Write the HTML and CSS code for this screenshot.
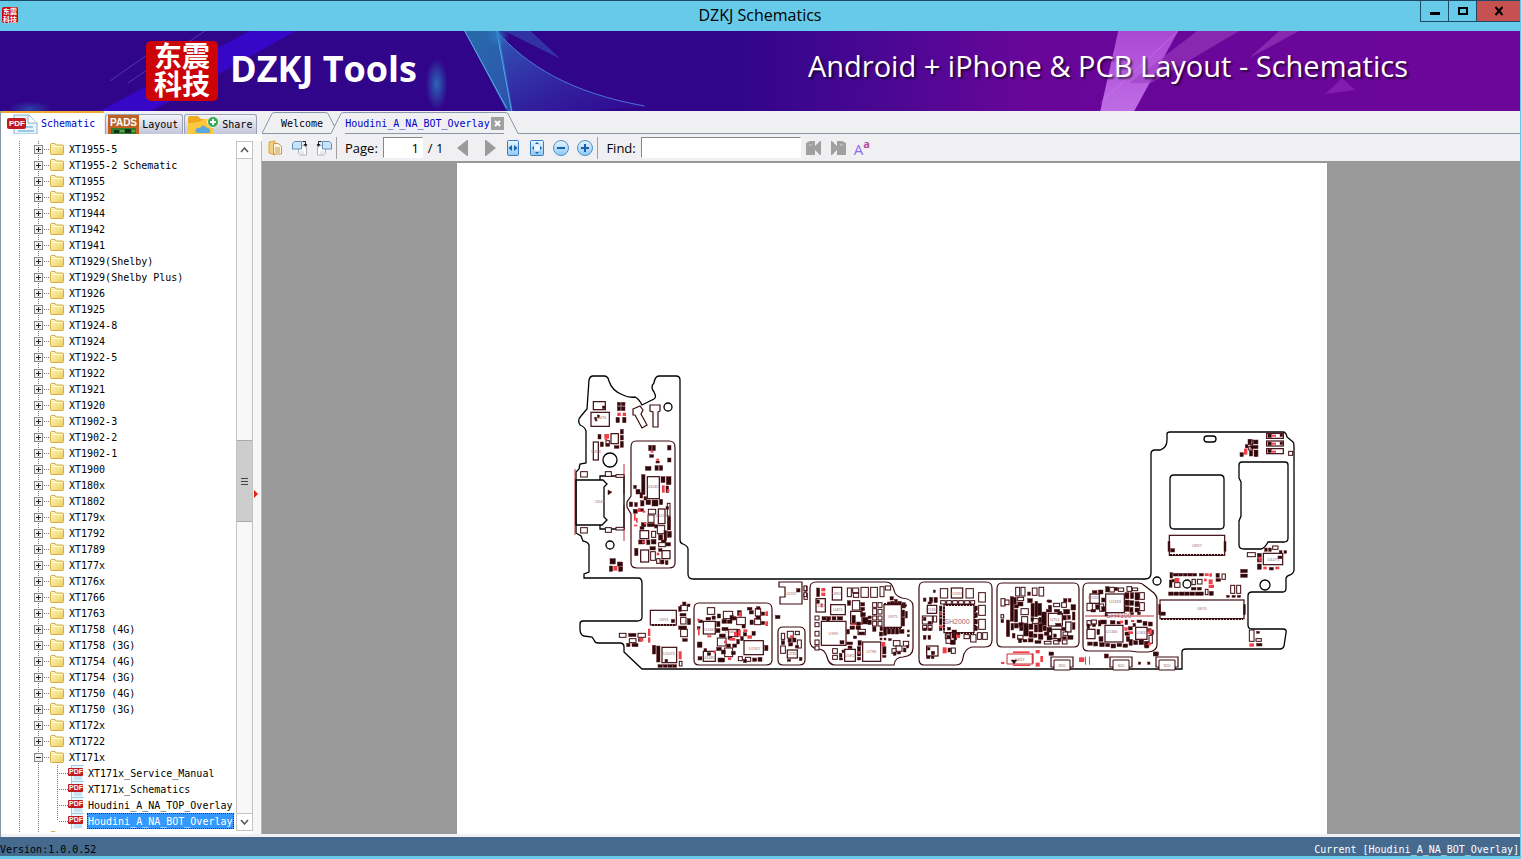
FILE: index.html
```html
<!DOCTYPE html>
<html lang="en">
<head>
    <meta charset="UTF-8">
    <meta name="viewport" content="width=device-width, initial-scale=1.0">
    <title>DZKJ Schematics</title>
    <link rel="stylesheet" href="styles.css">
</head>
<body>
    <!-- shared icons -->
    <svg class="defs" aria-hidden="true">
        <defs>
            <linearGradient id="folderFill" x1="0" y1="0" x2="1" y2="1">
                <stop offset="0" stop-color="#fff6c0"/>
                <stop offset="1" stop-color="#f0cf62"/>
            </linearGradient>
            <linearGradient id="blueFill" x1="0" y1="0" x2="0" y2="1">
                <stop offset="0" stop-color="#e8f6ff"/>
                <stop offset="1" stop-color="#8cc8f2"/>
            </linearGradient>
        </defs>
        <symbol id="folder" viewBox="0 0 14 12">
            <path d="M.5 1.5q0-1 1-1h3.500l1 1.500h6.500q1 0 1 1v7.500q0 1-1 1h-11q-1 0-1-1z" fill="url(#folderFill)" stroke="#d3ad48"/>
            <path d="M1.500 3.500h11" stroke="#fffbe0"/>
        </symbol>
        <symbol id="page-turn" viewBox="0 0 16 16">
            <path d="M6.500 5.500h8v9.500h-6l-2-2z" fill="#fff" stroke="#a9b4bf"/>
            <path d="M8 12h4M8 14h4" stroke="#ccd5dd"/>
            <path d="M.5 3.500l2-2h7v7.500h-9z" fill="#c9e4fa" stroke="#5a8fc0"/>
            <path d="M10.500 1.500h3v4" fill="none" stroke="#222"/>
            <path d="M11.500 4h4l-2 3z" fill="#222"/>
        </symbol>
    </svg>

    <div class="window">
        <header class="titlebar">
            <span class="app-icon">东震<br>科技</span>
            <h1 class="title">DZKJ Schematics</h1>
            <div class="controls">
                <button class="control" aria-label="Minimize"><svg width="10" height="10"><path d="M0 6h10v3H0z"/></svg></button>
                <button class="control" aria-label="Maximize"><svg width="10" height="10"><path d="M1 2h8v6H1z" fill="none" stroke="#000" stroke-width="2"/></svg></button>
                <button class="control close" aria-label="Close"><svg width="10" height="10"><path d="M1.500 1l7 8M8.500 1l-7 8" stroke="#000" stroke-width="2"/></svg></button>
            </div>
        </header>

        <div class="banner">
            <svg class="banner-art" viewBox="0 0 1521 80" preserveAspectRatio="none" aria-hidden="true">
                <defs>
                    <linearGradient id="teal" x1="0" y1="0" x2="1" y2="1">
                        <stop offset="0" stop-color="#276aa8"/>
                        <stop offset="1" stop-color="#2b82c2" stop-opacity=".6"/>
                    </linearGradient>
                    <linearGradient id="swoosh" x1="0" y1="0" x2="1" y2="1">
                        <stop offset="0" stop-color="#2f9bd6"/>
                        <stop offset="1" stop-color="#3b2ac0" stop-opacity=".2"/>
                    </linearGradient>
                    <linearGradient id="shard" x1="0" y1="0" x2="0" y2="1">
                        <stop offset="0" stop-color="#b34fda"/>
                        <stop offset="1" stop-color="#c778ee"/>
                    </linearGradient>
                    <radialGradient id="glow">
                        <stop offset="0" stop-color="#2b7fc4" stop-opacity=".8"/>
                        <stop offset="1" stop-color="#2b7fc4" stop-opacity="0"/>
                    </radialGradient>
                </defs>
                <path d="M250 0h46L152 80h-52z" fill="#3a08dc" opacity=".75"/>
                <path d="M205 0L128 52M160 15l-50 35" stroke="#4c38b8" stroke-width="1"/>
                <ellipse cx="437" cy="53" rx="11" ry="26" fill="url(#glow)"/>
                <ellipse cx="30" cy="78" rx="22" ry="8" fill="url(#glow)" opacity=".6"/>
                <path d="M465 0h34l14 80h-6z" fill="url(#teal)"/>
                <path d="M465 0l42 77M497 0l15 80" stroke="#5cb1ee" fill="none"/>
                <path d="M497 0c30 35 75 62 148 75l-55 5h-78z" fill="url(#swoosh)" opacity=".6"/>
                <path d="M497 0c30 35 75 62 148 75" stroke="#5a9df0" fill="none" opacity=".7"/>
                <path d="M505 0h26l30 28z" fill="#3350b8" opacity=".6"/>
                <ellipse cx="498" cy="4" rx="12" ry="12" fill="url(#glow)"/>
                <path d="M1119 0h60l-44 80h-34z" fill="url(#shard)" opacity=".9"/>
                <path d="M1101 72l78-72" stroke="#d893f2" opacity=".4"/>
                <path d="M1198 0h42l-88 52h-22zM1280 0h20l-50 27z" fill="#9c3dc0" opacity=".6"/>
                <path d="M1343 47l13 12-30 4z" fill="#8d27b8" opacity=".7"/>
            </svg>
            <div class="brand">
                <span class="seal">东震<br>科技</span>
                <span class="brand-name">DZKJ Tools</span>
            </div>
            <p class="slogan">Android + iPhone &amp; PCB Layout - Schematics</p>
        </div>

        <main class="main">
            <aside class="sidebar">
                <nav class="side-tabs">
                    <button class="side-tab active">
                        <svg width="32" height="20" viewBox="0 0 32 20">
                            <path d="M8 1h15l8 8v11H8z" fill="#e9f3fb" stroke="#8ab4d2"/>
                            <path d="M22 1v8h9" fill="#fff" stroke="#8ab4d2"/>
                            <path d="M15 13h12M12 17h16" stroke="#9cc9e6" stroke-width="2"/>
                            <rect x="1" y="4" width="19" height="11" rx="2" fill="#c11a22"/>
                            <text x="3" y="12" class="ico-pdf">PDF</text>
                        </svg>
                        Schematic
                    </button>
                    <button class="side-tab">
                        <svg width="31" height="19" viewBox="0 0 31 19">
                            <path d="M0 0h31v19H0z" fill="#c8601c"/>
                            <path d="M1 1h29v11H1z" fill="#b6622a"/>
                            <path d="M3 13h25v6H3z" fill="#2e7d2c"/>
                            <path d="M6 15h5v3H6zM17 14h6v4h-6z" fill="#17301a"/>
                            <path d="M12 16h4M24 16h3" stroke="#7fd05b"/>
                            <text x="2" y="11" class="ico-pads">PADS</text>
                        </svg>
                        Layout
                    </button>
                    <button class="side-tab">
                        <svg width="32" height="19" viewBox="0 0 32 19">
                            <path d="M1 3q0-2 2-2h8l3 3h12v15H1z" fill="#f0a821"/>
                            <path d="M1 8q12 0 16-4h9v15H1z" fill="#fdc73f"/>
                            <path d="M11 18q-4-1-2-4 2-2 4-1 3-5 7 0 4 0 3 5z" fill="#5ba7e0"/>
                            <circle cx="26" cy="7" r="5.500" fill="#35a853" stroke="#e8f7e8"/>
                            <path d="M23 7h6M26 4v6" stroke="#fff" stroke-width="2"/>
                        </svg>
                        Share
                    </button>
                </nav>
                <div class="tree-pane">
                    <ul class="tree" id="tree"></ul>
                    <div class="scrollbar">
                        <button class="scroll-btn" aria-label="Scroll up"><svg width="9" height="6"><path d="M1 5l3.500-4L8 5" fill="none" stroke="#555" stroke-width="1.500"/></svg></button>
                        <div class="track"><span class="thumb"></span></div>
                        <button class="scroll-btn" aria-label="Scroll down"><svg width="9" height="6"><path d="M1 1l3.500 4L8 1" fill="none" stroke="#555" stroke-width="1.500"/></svg></button>
                    </div>
                    <button class="splitter" aria-label="Collapse panel"><svg width="4" height="8"><path d="M0 0l4 4-4 4z" fill="#e02010"/></svg></button>
                </div>
            </aside>

            <section class="document">
                <nav class="doc-tabs">
                    <button class="doc-tab">
                        <svg class="tab-edge" width="14" height="22"><path d="M0 21.500L10 1.500q1-1 4-1" fill="none" stroke="#8a97a8"/></svg>
                        <span class="tab-label">Welcome</span>
                        <svg class="tab-edge" width="14" height="22"><path d="M0 .5q3 0 4 1L14 21.500" fill="none" stroke="#8a97a8"/></svg>
                    </button>
                    <button class="doc-tab active">
                        <svg class="tab-edge" width="14" height="22"><path d="M0 21.500L10 1.500q1-1 4-1V22H0z" fill="#f0f0f2"/><path d="M0 21.500L10 1.500q1-1 4-1" fill="none" stroke="#8a97a8"/></svg>
                        <span class="tab-label">Houdini_A_NA_BOT_Overlay<svg class="tab-close" width="13" height="13"><path d="M0 0h13v13H0z" fill="#a0a0a0"/><path d="M4 4l5 5M9 4l-5 5" stroke="#fff" stroke-width="2"/></svg></span>
                        <svg class="tab-edge" width="14" height="22"><path d="M0 .5q3 0 4 1L14 21.500V22H0z" fill="#f0f0f2"/><path d="M0 .5q3 0 4 1L14 21.500" fill="none" stroke="#8a97a8"/></svg>
                    </button>
                </nav>

                <div class="toolbar">
                    <button class="tool" aria-label="Open">
                        <svg width="16" height="16"><path d="M1 2l6-1v14l-6-2z" fill="#f6cf7c" stroke="#d8a648"/><path d="M5.500 3.500h5l3 3V14h-8z" fill="#fdf3dd" stroke="#c79b4b"/><path d="M7 8h5M7 10h5M7 12h5" stroke="#c79b4b"/></svg>
                    </button>
                    <button class="tool" aria-label="Rotate right"><svg width="16" height="16"><use href="#page-turn"/></svg></button>
                    <button class="tool flip" aria-label="Rotate left"><svg width="16" height="16"><use href="#page-turn"/></svg></button>
                    <span class="sep"></span>
                    <label class="tool-label" for="page">Page:</label>
                    <input class="page-input" id="page" type="text" value="1">
                    <span class="page-count">/ 1</span>
                    <button class="tool arrow" aria-label="Previous page"><svg width="12" height="16"><path d="M0 8l10-8h1v16h-1z" fill="#9b9b9b"/></svg></button>
                    <button class="tool arrow" aria-label="Next page"><svg width="12" height="16"><path d="M12 8L2 0H1v16h1z" fill="#9b9b9b"/></svg></button>
                    <button class="tool" aria-label="Fit width">
                        <svg width="16" height="16"><rect x="2.500" y=".5" width="11" height="15" rx="1" fill="url(#blueFill)" stroke="#3a7cc0"/><path d="M3.500 8l3.500-3v6zM12.500 8L9 5v6z" fill="#1b5fa8"/></svg>
                    </button>
                    <button class="tool" aria-label="Fit page">
                        <svg width="16" height="16"><rect x="1.500" y=".5" width="13" height="15" rx="1" fill="url(#blueFill)" stroke="#3a7cc0"/><circle cx="8" cy="8" r="3" fill="#e8f6ff"/><path d="M8 2l2 2H6zM8 14l2-2H6zM3 8l2-2v4zM13 8l-2-2v4z" fill="#1b5fa8"/></svg>
                    </button>
                    <button class="tool" aria-label="Zoom out">
                        <svg width="16" height="16"><circle cx="8" cy="8" r="7.500" fill="url(#blueFill)" stroke="#4a90cc"/><path d="M4 8h8" stroke="#1b5fa8" stroke-width="2"/></svg>
                    </button>
                    <button class="tool" aria-label="Zoom in">
                        <svg width="16" height="16"><circle cx="8" cy="8" r="7.500" fill="url(#blueFill)" stroke="#4a90cc"/><path d="M4 8h8M8 4v8" stroke="#1b5fa8" stroke-width="2"/></svg>
                    </button>
                    <span class="sep"></span>
                    <label class="tool-label" for="find">Find:</label>
                    <input class="find-input" id="find" type="text">
                    <button class="tool find-step" aria-label="Find previous">
                        <svg width="16" height="16"><path d="M0 3l4-2h5v5l5-5h1v14h-1l-5-5v5H0z" fill="#a0a0a0"/><path d="M3 5h3" stroke="#d0d0d0"/></svg>
                    </button>
                    <button class="tool find-step" aria-label="Find next">
                        <svg width="16" height="16"><path d="M16 3l-4-2H7v5L2 1H1v14h1l5-5v5h9z" fill="#a0a0a0"/><path d="M13 5h-3" stroke="#d0d0d0"/></svg>
                    </button>
                    <button class="tool match-case" aria-label="Match case">
                        <span class="case-big">A</span><span class="case-small">a</span>
                    </button>
                </div>

                <div class="viewport">
                    <div class="sheet">
                        <svg class="board" id="board" viewBox="457 163 870 671" preserveAspectRatio="xMidYMin meet" role="img" aria-label="Board overlay">
                            <!-- board edge -->
                            <path class="edge" d="M589 380Q590 376 593 376H604Q608 376 609 381Q612 391 623 395Q629 398 635 397Q639 399 642 405L654 399Q657 397 654 392Q650 387 654 383Q655 376 659 376H676Q680 376 680 380V540Q680 543 683 544Q688 546 688 549V574Q688 579 693 579H1145Q1151 579 1151 573V454Q1151 450 1155 450H1160Q1167 448 1167 440V434Q1167 432 1170 432H1283Q1286 432 1287 437L1293 442Q1294 443 1294 446V570Q1294 573 1290 575Q1286 576 1286 579V588Q1286 592 1283 592H1252Q1248 592 1248 596V625Q1248 629 1252 629H1283Q1287 629 1286 633L1284 646Q1283 649 1280 649H1186Q1182 649 1182 652V669H642L624 652V647Q624 643 620 643H598Q595 643 594 640L592 637L584 636Q580 635 580 629V624Q580 621 583 621H637Q642 621 642 617V583Q642 578 638 578H584V574L589 572V545Q588 542 583 541L581 536L576 533V472L579 469L580 464L586 463V431Q585 427 580 425Q577 420 581 416L587 409Z"/>
                            <path class="edge" d="M1170 479q0-4 4-4h46q4 0 4 4v46q0 4-4 4h-46q-4 0-4-4zM1242 462h43q3 0 3 3v73q0 4-4 4h-16q-3 6-7 7h-17q-5 0-5-4v-24l2-5v-34l-2-4v-13q0-3 3-3z"/>
                            <rect class="edge" x="1204" y="436" width="12" height="6" rx="3"/>
                            <circle class="edge" cx="668" cy="407" r="4"/>
                            <circle class="edge" cx="610" cy="460" r="7"/>
                            <circle class="edge" cx="610" cy="545" r="4"/>
                            <circle class="edge" cx="1157" cy="581" r="4"/>
                            <circle class="edge" cx="1187" cy="584" r="4"/>
                            <circle class="edge" cx="1265" cy="585" r="5"/>
                            <!-- shield cans -->
                            <path class="shield" d="M636 441h33q6 0 6 6v116q0 5-6 5h-32q-6 0-6-5v-49l-4-7v-5l4-6v-49q0-6 5-6z"/>
                            <path class="shield" d="M699 603h67q6 0 6 6v51q0 5-6 5h-67q-5 0-5-5v-51q0-6 5-6zM783 627h16q6 0 6 5v28q0 5-6 5h-16q-5 0-5-5v-28q0-5 5-5z"/>
                            <path class="shield" d="M816 582h70q6 0 8 8 1 6 8 8 11 1 11 8v42q0 8-10 9-8 0-9 8h-59q-6 0-8-8-2-8-9-8-8-1-8-8v-53q0-6 6-6zM924 582h62q6 0 6 6v52q0 7-7 7h-13q-8 2-9 11-1 7-7 7h-32q-5 0-5-6v-71q0-6 5-6z"/>
                            <path class="shield" d="M1002 583h72q5 0 5 6v53q0 5-5 5h-72q-5 0-5-5v-53q0-6 5-6zM1088 583h51q3 0 6 3l9 7q3 3 3 6v46q0 6-9 7h-10l-8-1h-42q-5 0-5-5v-57q0-6 5-6z"/>
                            <path class="red" d="M1085 616h69M575 469v66M624 464v30M624 505v36"/>
                            <!-- dock connector -->
                            <path class="edge" d="M576 480h27l4 4-3 3v30l3 3-5 5h-26zM600 480v-4h24M600 525v4h24M624 476v53"/>
                            <!-- side contacts -->
                            <path class="chip" d="M633 409l7-3 3 4-2 4 6 11-5 3-7-13h-2zM650 405h10v6l-2 1v15h-5v-15l-3-1z"/>
                            <path class="chip" d="M779 582h23v22h-22v-7h5v-10h-6z"/>
                        </svg>
                    </div>
                </div>
            </section>
        </main>

        <footer class="statusbar">
            <span class="version">Version:1.0.0.52</span>
            <span class="current">Current [Houdini_A_NA_BOT_Overlay]</span>
        </footer>
    </div>

    <script src="script.js"></script>
</body>
</html>
```
FILE: styles.css
```css
* {
    box-sizing: border-box;
}
body {
    margin: 0;
    font-family: "DejaVu Sans Mono", "Liberation Mono", monospace;
    font-size: 10px;
    color: #000;
}
button {
    padding: 0;
    border: none;
    background: none;
    font: inherit;
    color: inherit;
}
svg {
    display: block;
    flex-shrink: 0;
}
.defs {
    position: absolute;
    width: 0;
    height: 0;
}
.window {
    display: flex;
    flex-direction: column;
    height: 100vh;
    border-right: 1px solid #66cae8;
    border-bottom: 3px solid #66cae8;
    overflow: hidden;
}

/* title bar */
.titlebar {
    display: grid;
    grid-template-columns: 1fr auto 1fr;
    flex-shrink: 0;
    height: 31px;
    border-top: 1px solid #1d4a66;
    background: #66cae8;
}
.app-icon {
    width: 16px;
    height: 16px;
    margin: 6px 2px;
    border-radius: 2px;
    background: #c8060a;
    color: #fff;
    font: 700 7px/8px "Noto Sans CJK SC", sans-serif;
    text-align: center;
}
.title {
    margin: 0;
    font: 400 16px/29px "Open Sans", sans-serif;
}
.controls {
    display: flex;
    justify-self: end;
    height: 21px;
}
.control {
    display: flex;
    align-items: center;
    justify-content: center;
    width: 28px;
    border: 1px solid #1d4a66;
    border-top: none;
    border-right: none;
}
.close {
    width: 44px;
    background: #c75050;
}

/* banner */
.banner {
    position: relative;
    display: flex;
    align-items: center;
    justify-content: space-between;
    flex-shrink: 0;
    height: 80px;
    padding: 0 112px 0 146px;
    background: linear-gradient(90deg, #30058a 0%, #30058a 48%, #4a0792 58%, #69069a 68%, #6b0699 100%);
    color: #fff;
    font-family: "Open Sans", sans-serif;
}
.banner-art {
    position: absolute;
    inset: 0;
    width: 100%;
    height: 100%;
}
.brand {
    position: relative;
    display: flex;
    align-items: center;
    gap: 12px;
}
.seal {
    width: 72px;
    height: 60px;
    border-radius: 5px;
    background: #cc0408;
    font: 700 28px/28px "Noto Sans CJK SC", sans-serif;
    text-align: center;
}
.brand-name {
    padding-bottom: 4px;
    font-size: 36px;
    line-height: 40px;
    font-weight: 700;
}
.slogan {
    position: relative;
    margin: 0 0 10px;
    font-size: 29px;
    line-height: 40px;
    text-shadow: 2px 2px 2px rgba(0, 0, 0, 0.6);
}

.main {
    display: flex;
    flex: 1;
    min-height: 0;
    background: #f0f0f2;
}

/* left panel */
.sidebar {
    display: flex;
    flex-direction: column;
    width: 262px;
    flex-shrink: 0;
    padding-bottom: 3px;
    border-left: 1px solid #8a97a8;
}
.side-tabs {
    display: flex;
    align-items: flex-end;
    gap: 1px;
    height: 23px;
}
.side-tab {
    display: flex;
    align-items: center;
    gap: 3px;
    height: 20px;
    padding: 0 4px 0 2px;
    border: 1px solid #9aa2b8;
    border-bottom: none;
    border-radius: 3px 3px 0 0;
    background: linear-gradient(#f4f4fa, #c3c6da);
    overflow: hidden;
}
.side-tab.active {
    height: 23px;
    padding: 0 9px 0 5px;
    border: none;
    border-top: 2px solid #f0a830;
    border-radius: 0;
    background: #fff;
    color: #0000c8;
}
.ico-pdf {
    font: 700 8px "Liberation Sans", sans-serif;
    fill: #fff;
}
.ico-pdf.small {
    font-size: 7px;
}
.ico-pads {
    font: 700 10px "Liberation Sans", sans-serif;
    fill: #fff;
}
.tree-pane {
    display: flex;
    flex: 1;
    min-height: 0;
    padding: 7px 0 0;
    background: #fff;
}
.tree {
    flex: 1;
    margin: 0 0 2px;
    padding: 0 0 0 33px;
    list-style: none;
    overflow: hidden;
    background: repeating-linear-gradient(#777 0 1px, transparent 1px 2px) 18px 0 / 1px 100% no-repeat;
}
.node {
    display: flex;
    align-items: center;
    height: 16px;
    line-height: 15px;
    white-space: nowrap;
    background: repeating-linear-gradient(#777 0 1px, transparent 1px 2px) 4px 0 / 1px 100% no-repeat;
}
.expander {
    width: 9px;
    height: 9px;
    border: 1px solid #888;
    background:
        linear-gradient(#222, #222) center / 5px 1px no-repeat,
        linear-gradient(#222, #222) center / 1px 5px no-repeat,
        #f0f0f0;
}
.expander.open {
    background: linear-gradient(#222, #222) center / 5px 1px no-repeat, #f0f0f0;
}
.twig {
    width: 7px;
    height: 1px;
    background: repeating-linear-gradient(90deg, transparent 0 1px, #777 1px 2px);
}
.node-name {
    padding: 1px 0 0 5px;
}
.leaf {
    margin-left: 4px;
    background-position: 0 0;
}
.leaf .branch {
    width: 30px;
    height: 16px;
    background:
        repeating-linear-gradient(#777 0 1px, transparent 1px 2px) 19px 0 / 1px 100% no-repeat,
        repeating-linear-gradient(90deg, transparent 0 1px, #777 1px 2px) 20px 8px / 10px 1px no-repeat;
}
.leaf.last .branch {
    background-size: 1px 8px, 10px 1px;
}
.leaf .node-name {
    margin-left: 3px;
    padding: 1px 1px 0;
}
.leaf.selected .node-name {
    outline: 1px dotted #333;
    outline-offset: -1px;
    background: #3399ff;
    color: #fff;
}
.scrollbar {
    display: flex;
    flex-direction: column;
    width: 17px;
    margin-bottom: 3px;
    border: 1px solid #c4c4c4;
}
.scroll-btn {
    display: flex;
    align-items: center;
    justify-content: center;
    height: 16px;
}
.track {
    display: flex;
    flex: 1;
    flex-direction: column;
    border: 1px solid #c4c4c4;
    border-left: none;
    border-right: none;
    background: #f8f8f8;
}
.track::before {
    content: "";
    flex: 282;
}
.track::after {
    content: "";
    flex: 292;
}
.thumb {
    flex: 80;
    border-top: 1px solid #aaa;
    border-bottom: 1px solid #aaa;
    background: repeating-linear-gradient(#444 0 1px, transparent 1px 3px) center / 7px 7px no-repeat, #cdcdcd;
}
.splitter {
    display: flex;
    align-items: center;
    width: 9px;
    padding: 12px 0 0 1px;
    border-right: 1px solid #b8b8b8;
    background: #f7f7f8;
}

/* document area */
.document {
    display: flex;
    flex: 1;
    flex-direction: column;
    min-width: 0;
    padding-bottom: 3px;
}
.doc-tabs {
    display: flex;
    align-items: flex-end;
    height: 23px;
    flex-shrink: 0;
    border-bottom: 1px solid #8a97a8;
}
.doc-tab {
    display: flex;
    align-items: center;
    height: 20px;
}
.doc-tab.active {
    margin-left: -7px;
    color: #0000c8;
}
.tab-label {
    display: flex;
    align-items: center;
    gap: 1px;
    height: 22px;
    padding: 0 1px 0 5px;
    border-top: 1px solid #8a97a8;
}
.doc-tab.active .tab-label {
    padding: 0;
}
.toolbar {
    display: flex;
    align-items: center;
    gap: 8px;
    height: 29px;
    flex-shrink: 0;
    padding: 0 6px;
    border-bottom: 2px solid #999;
    font-family: "Open Sans", sans-serif;
    font-size: 13px;
}
.tool.flip {
    transform: scaleX(-1);
}
.tool.arrow {
    margin: 0 1px 0 6px;
}
.sep {
    width: 1px;
    height: 22px;
    margin: 0 0 0 -4px;
    background: #a0a0a0;
}
.page-input,
.find-input {
    height: 21px;
    margin: 0 -3px;
    border: 1px solid #fff;
    border-top-color: #888;
    border-left-color: #888;
    background: #fff;
    font: inherit;
}
.page-input {
    width: 40px;
    padding: 0 3px;
    text-align: right;
}
.find-input {
    width: 160px;
}
.match-case {
    display: flex;
    align-items: flex-start;
}
.case-big {
    padding-top: 3px;
    font-size: 15px;
    line-height: 16px;
    color: #8d6bf0;
}
.case-small {
    font-size: 11px;
    line-height: 11px;
    font-weight: 700;
    color: #b04a9c;
}
.viewport {
    display: flex;
    flex: 1;
    justify-content: center;
    min-height: 0;
    padding-left: 2px;
    background: #999;
}
.sheet {
    width: 100%;
    max-width: 870px;
    background: #fff;
    overflow: hidden;
}
.board {
    width: 100%;
}

/* board drawing */
.edge {
    fill: none;
    stroke: #000;
    stroke-width: 1.300;
}
.shield,
.chip {
    fill: none;
    stroke: #3c0a10;
    stroke-width: 1.200;
}
.chip {
    fill: #fff;
}
.part {
    fill: #2a0a0c;
    stroke: #6a2024;
    stroke-width: 0.500;
}
.pad {
    fill: #fff;
    stroke: #3c0a10;
    stroke-width: 1;
}
.mark {
    fill: #f04048;
}
.red {
    fill: none;
    stroke: #c03038;
}
.pins {
    fill: none;
    stroke: #3c0a10;
    stroke-width: 2;
    stroke-dasharray: 2 1;
}
.ref {
    font: 4px "Liberation Sans", sans-serif;
    fill: #a0656c;
    text-anchor: middle;
}
.ref.can {
    font-size: 7px;
}

.statusbar {
    display: flex;
    align-items: flex-end;
    justify-content: space-between;
    flex-shrink: 0;
    height: 19px;
    line-height: 13px;
    background: #456a8e;
}
.current {
    color: #fff;
    padding-right: 1px;
}
```
FILE: script.js
```javascript
const folders = [
    'XT1955-5', 'XT1955-2 Schematic', 'XT1955', 'XT1952', 'XT1944', 'XT1942', 'XT1941',
    'XT1929(Shelby)', 'XT1929(Shelby Plus)', 'XT1926', 'XT1925', 'XT1924-8', 'XT1924',
    'XT1922-5', 'XT1922', 'XT1921', 'XT1920', 'XT1902-3', 'XT1902-2', 'XT1902-1', 'XT1900',
    'XT180x', 'XT1802', 'XT179x', 'XT1792', 'XT1789', 'XT177x', 'XT176x', 'XT1766', 'XT1763',
    'XT1758 (4G)', 'XT1758 (3G)', 'XT1754 (4G)', 'XT1754 (3G)', 'XT1750 (4G)', 'XT1750 (3G)',
    'XT172x', 'XT1722', 'XT171x'
];
const files = ['XT171x_Service_Manual', 'XT171x_Schematics', 'Houdini_A_NA_TOP_Overlay', 'Houdini_A_NA_BOT_Overlay'];

const folderIcon = '<svg width="14" height="12"><use href="#folder"/></svg>';
const pdfIcon = `<svg width="16" height="16">
    <path d="M4 1h11v15H4z" fill="#eaf6fd"/>
    <path d="M3.5 0v16M3.5 .5h12" fill="none" stroke="#9ccbe6"/>
    <path d="M6 12h8M6 14h8" stroke="#9fd0ec"/>
    <rect y="3" width="15" height="8" rx="1" fill="#c11a22"/>
    <text x="1" y="9" class="ico-pdf small">PDF</text>
</svg>`;

// Folder tree
function showTree() {
    const tree = document.getElementById('tree');
    folders.forEach((name, i) => {
        const open = i === folders.length - 1 ? ' open' : '';
        tree.innerHTML += `<li class="node"><span class="expander${open}"></span><span class="twig"></span>${folderIcon}<span class="node-name">${name}</span></li>`;
    });
    files.forEach((name, i) => {
        const last = i === files.length - 1 ? ' last selected' : '';
        tree.innerHTML += `<li class="node leaf${last}"><span class="branch"></span>${pdfIcon}<span class="node-name">${name}</span></li>`;
    });
    tree.innerHTML += `<li class="node"><span class="expander"></span><span class="twig"></span>${folderIcon}</li>`;
}

// Board parts. Each area has its own origin, and its lists are "x y w h" in thirds of a unit.
const areas = [
    {
        x: 560, y: 360,
        chip: '100 125 36 24,93 157 55 42,153 221 22 30,100 246 15 54,262 350 36 66,295 447 20 44,240 512 26 24,242 570 24 36,306 572 24 24',
        pad: '292 497 22 24,265 448 22 14,264 465 18 22,272 575 14 26,322 430 8 38,275 514 12 18,62 335 20 16,136 335 18 14,62 503 20 16,136 503 18 14,168 344 24 8,168 502 24 8,138 242 10 16,296 548 20 12,290 596 10 14',
        part: '172 127 10 10,184 127 11 10,172 140 10 12,184 140 11 12,168 172 10 16,188 172 10 16,114 223 9 14,181 208 9 14,181 226 9 14,181 244 9 18,121 246 9 14,138 250 9 8,163 257 14 8,104 172 6 6,112 165 6 8,106 178 5 5,127 138 8 8,266 256 9 16,277 256 9 16,323 256 10 14,269 284 12 8,288 303 10 6,323 294 10 12,256 319 17 12,285 317 10 14,298 317 10 14,245 344 10 60,221 376 8 10,228 388 12 14,240 398 8 16,303 350 12 18,319 350 14 24,318 378 8 20,208 426 10 14,224 428 8 12,242 422 10 16,258 420 14 14,276 420 18 18,298 418 10 16,220 448 12 12,238 446 12 8,322 470 10 40,244 488 14 12,262 490 22 10,312 512 8 30,296 524 12 16,322 514 12 18,236 540 18 12,260 540 10 14,274 538 14 14,224 565 10 22,296 566 10 8,270 560 16 10,318 548 14 10,302 600 10 12,316 602 8 12,150 596 16 16,172 606 16 12,148 618 10 16,176 620 12 14,240 500 12 8,318 440 8 8,284 494 8 10,252 410 8 10,304 540 14 8,322 485 5 5',
        red: '172 158 10 10,188 158 10 10,133 222 14 14,134 235 8 6,306 376 8 22,320 388 8 8,289 296 8 6,234 444 8 12,222 460 5 22,228 474 5 14,252 486 6 8,222 494 10 5,246 542 10 8,290 578 8 8,160 618 12 14,272 272 8 6,248 452 8 6',
        ref: '125 178,108 278,120 430,280 383,304 470'
    },
    {
        x: 570, y: 570,
        chip: '241 121 78 44,276 232 44 46,400 154 36 38,400 244 36 30,522 212 58 42,652 240 30 24',
        pad: '148 190 20 12,204 190 22 12,178 206 20 12,332 106 20 16,332 142 16 20,332 178 20 22,412 113 22 20,460 124 28 22,500 142 26 22,476 178 28 22,442 204 26 24,464 234 24 26,556 116 16 22,554 146 18 18,652 184 18 20,634 190 10 18,632 228 14 22,682 210 12 24,676 184 12 10,328 274 8 14,526 262 16 12,702 70 10 18,505 260 12 12',
        part: '176 190 22 10,170 220 10 10,186 220 18 10,205 206 10 8,247 226 10 26,260 228 10 48,264 284 14 8,280 284 12 8,294 284 12 8,308 284 12 8,338 96 10 10,352 102 8 8,326 110 8 14,330 130 18 8,352 146 10 18,326 168 24 10,338 206 14 8,382 216 14 16,386 150 12 8,382 170 8 8,384 260 12 10,408 142 14 8,426 138 10 10,442 132 10 12,456 148 14 12,472 150 14 10,480 136 10 14,502 122 12 14,488 140 10 10,516 164 10 10,440 154 10 16,438 176 12 12,456 172 18 10,448 192 18 10,474 200 12 8,500 178 10 18,520 188 10 10,470 222 12 10,440 232 14 10,454 240 12 12,444 264 20 12,484 244 12 10,488 222 12 10,500 208 8 14,512 200 8 12,532 112 14 8,538 122 12 10,560 110 10 8,558 138 14 10,540 150 10 14,574 126 10 10,574 154 10 10,546 184 10 12,584 226 10 16,520 268 10 10,548 264 12 10,564 262 12 12,616 136 14 10,702 48 10 16,680 56 10 10,654 206 10 10,668 204 10 12,656 218 12 10,634 212 10 12,652 268 10 6,676 226 10 8,688 262 8 10,304 148 10 10,285 268 8 8,412 248 10 8,402 236 8 8',
        red: '234 176 7 22,234 202 7 16,208 204 12 10,326 244 9 24,382 146 8 8,506 126 10 14,586 124 8 14,586 154 8 14,492 186 10 12,478 204 18 8,532 196 14 10,520 178 12 8,384 174 5 22,430 242 8 8,412 196 12 6,462 212 8 8,660 196 12 6,474 262 10 8,504 180 8 20',
        ref: '282 152,297 256,420 182,554 240,418 268,662 76,668 256,482 188'
    },
    {
        x: 800, y: 570,
        chip: '97 52 28 38,48 86 28 40,92 104 44 30,152 124 34 38,64 154 74 72,188 216 54 58,134 238 32 36,252 104 52 68,432 104 90 84,382 106 28 24,380 228 34 30,454 54 34 30',
        pad: '142 54 12 26,158 54 18 14,183 52 22 30,212 52 20 30,157 92 22 28,160 70 16 12,218 98 12 14,234 98 12 14,218 116 12 18,234 118 12 14,218 138 12 12,234 138 12 12,218 154 12 14,234 154 12 14,174 178 22 16,45 138 12 12,45 158 12 12,45 184 12 14,45 210 12 14,45 228 12 12,98 236 14 14,98 256 14 12,280 212 20 16,288 228 18 16,310 214 16 14,276 236 12 14,240 50 12 30,256 48 16 12,12 48 8 14,12 68 8 12,421 56 22 28,498 56 22 28,536 68 20 28,536 106 20 30,536 148 20 30,532 188 12 20,548 188 14 20,367 138 30 24,368 166 12 14,384 166 12 14,436 192 16 14,438 206 14 14,492 194 16 12,512 194 16 22,422 92 14 10,440 92 14 10,458 92 14 10,476 92 14 10,494 92 14 10,512 92 12 10,454 234 12 16,400 138 10 18',
        part: '50 54 9 26,50 90 8 10,66 140 12 10,80 140 12 10,96 140 12 10,112 140 16 10,80 148 8 6,156 136 10 26,170 156 12 10,188 142 16 20,142 92 10 14,182 98 12 10,182 112 12 10,182 128 14 12,150 168 14 10,168 168 14 10,140 178 8 14,160 198 10 8,176 186 18 8,140 216 18 8,120 212 12 10,144 228 12 8,174 212 10 14,172 230 10 14,172 246 10 12,172 262 10 8,126 240 8 8,118 250 8 12,118 264 10 6,250 174 10 22,262 176 10 16,274 176 10 16,286 176 10 16,298 178 14 12,262 96 8 8,272 94 10 10,284 94 8 10,294 94 10 10,306 98 10 16,306 120 8 20,306 142 8 26,240 170 8 12,218 170 10 14,204 150 10 14,204 138 10 8,310 104 10 6,316 124 6 20,284 88 8 6,270 80 10 10,238 186 10 12,240 204 6 6,252 204 6 6,266 206 8 6,248 230 10 22,248 256 10 6,280 246 8 10,292 246 10 6,310 234 8 12,322 180 6 6,322 194 6 6,320 226 6 8,400 60 6 8,370 84 8 10,388 82 10 16,402 82 10 16,384 96 10 6,418 108 8 16,418 128 8 14,418 146 8 18,418 168 8 14,524 108 8 14,524 128 8 14,524 148 8 14,524 168 8 14,370 142 8 10,384 154 10 8,370 174 8 8,386 174 8 8,370 196 8 12,384 196 8 12,440 196 10 10,456 190 10 14,470 190 10 10,452 210 14 14,382 232 8 8,394 244 10 10,380 258 10 8,394 258 8 8,444 234 8 12,462 192 8 18,456 180 14 8,442 172 10 8',
        red: '64 54 12 10,64 68 12 10,244 216 12 12,468 194 12 10,418 130 8 6,420 166 8 8,428 232 12 18,62 100 6 12,156 160 8 6,174 246 6 6',
        ref: '110 76,62 110,114 122,100 196,214 248,148 262,278 144,396 122,470 74'
    },
    {
        x: 985, y: 570,
        chip: '362 72 56 56,360 166 54 50,190 130 42 38,315 72 28 28,306 178 24 28,452 172 34 36,242 156 16 30,200 178 28 28',
        pad: '92 52 12 26,108 52 12 26,142 54 14 22,162 52 14 26,48 86 12 22,60 90 12 14,98 82 18 10,108 116 22 18,110 140 18 20,142 146 18 14,206 100 18 10,230 98 14 14,48 134 8 10,234 186 14 10,232 210 14 12,306 100 16 22,344 102 12 22,426 50 14 14,442 54 16 8,464 68 14 20,464 98 14 24,306 152 12 14,320 150 14 12,492 196 10 24,400 54 16 10,374 52 14 14,206 212 16 10,178 214 20 8,98 196 16 12',
        part: '76 80 10 74,86 82 8 20,88 104 12 10,88 118 10 38,98 96 16 12,104 170 10 12,128 66 8 10,128 86 14 12,138 100 10 40,150 94 8 46,158 100 12 36,138 142 8 12,162 142 8 16,170 126 14 40,64 150 10 50,48 148 8 10,78 160 8 20,88 160 12 14,102 158 12 12,116 162 14 36,132 162 12 16,148 164 10 22,160 160 12 26,174 168 10 14,186 172 14 14,132 184 12 18,146 192 10 10,160 192 14 16,178 186 14 10,82 190 8 14,100 206 10 12,114 208 12 8,130 206 14 10,150 212 18 8,190 90 10 8,186 90 6 6,190 106 10 12,184 118 16 8,208 118 16 8,218 124 12 10,236 86 10 10,236 118 18 14,258 104 14 16,232 136 12 14,248 136 8 12,262 126 8 24,262 158 8 20,212 160 16 8,230 172 10 10,186 196 14 14,206 192 8 10,218 206 10 8,232 200 12 8,248 196 16 12,250 86 8 10,340 60 14 12,362 50 10 16,388 52 10 10,322 62 14 8,420 68 12 18,436 68 10 18,450 68 12 22,420 90 12 16,434 92 12 14,450 94 12 16,420 110 12 14,434 112 10 14,450 114 12 12,332 104 10 14,318 118 14 8,350 84 10 12,350 110 10 14,436 128 10 6,458 126 8 8,306 162 8 14,322 162 10 8,340 152 8 16,336 178 8 16,346 150 18 12,376 152 14 10,396 154 10 8,342 200 12 14,308 216 14 10,326 216 12 12,344 218 14 12,362 220 12 10,378 222 14 12,396 220 14 10,414 222 14 10,432 208 10 18,446 212 12 12,462 210 14 14,478 214 14 18,420 150 8 14,420 186 14 10,430 170 12 10,444 160 8 10,456 150 14 8,474 154 12 12,490 156 12 12,488 176 10 8,496 180 10 14,480 224 10 10,360 130 8 8,424 200 10 14,192 246 14 10,200 264 14 8,358 252 12 12,420 264 12 12,378 264 10 10,506 246 14 10,514 264 10 10,460 276 7 7,488 276 7 7',
        red: '152 240 12 10,152 278 12 12,166 258 8 18,48 276 10 6,282 262 16 14,300 260 3 24,312 260 3 24,404 152 10 8,418 172 10 10,430 184 14 8,490 178 12 14,488 218 10 8,438 150 10 6,84 244 50 5,84 284 52 4,140 250 5 30',
        ref: '390 100,380 190,210 154,326 88,470 192,104 272'
    },
    {
        x: 1140, y: 420,
        chip: '88 346 166 60,370 400 58 34,380 40 50 15,380 63 50 15,380 86 50 15',
        pad: '322 398 24 12,398 378 16 10,446 94 12 12,326 60 12 14,326 80 12 10',
        part: '84 364 6 30,252 364 6 30,92 386 12 10,324 58 10 14,340 60 14 12,316 74 8 10,332 76 22 10,300 98 10 12,328 92 10 16,342 90 12 20,384 42 10 10,384 66 10 10,384 88 10 10,374 384 8 10,386 384 8 10,352 400 12 12,352 416 12 10,352 432 12 16,418 392 8 8,432 392 8 8,414 408 12 8,388 442 12 8,420 42 8 8,420 66 8 8',
        red: '312 86 10 18,356 410 8 14,370 440 10 8,406 440 12 8,396 44 12 6,396 68 12 6,396 92 12 6',
        ref: '171 382,400 424'
    },
    {
        x: 1140, y: 560,
        chip: '60 120 252 56',
        pad: '272 76 12 24,290 76 12 24,328 210 14 34,104 68 16 14,172 58 14 14,196 88 8 16,156 58 10 16,246 42 10 16,348 236 16 8',
        part: '56 134 6 30,310 134 6 30,62 156 14 10,90 38 8 16,100 40 14 8,116 40 12 8,130 40 12 8,144 40 12 8,158 40 12 8,178 40 12 8,88 60 8 22,96 58 8 8,86 96 14 10,102 96 14 10,118 96 14 10,134 96 14 10,150 96 14 10,166 96 24 10,154 82 14 8,172 82 12 8,208 94 12 12,228 40 10 12,228 56 14 8,302 28 20 10,302 42 20 10,260 106 8 6,276 106 10 6,292 106 10 6,350 214 8 6,350 250 16 8,40 276 14 12',
        red: '104 54 14 12,206 58 12 14,206 74 16 10,192 56 8 8,194 40 12 8,208 40 8 10,328 250 14 10',
        ref: '186 150'
    }
];

// Switches along the bottom edge
const switches = [1062, 1121, 1167];

function rects(list, cls) {
    return list.split(',').map(item => {
        const [x, y, w, h] = item.split(' ').map(n => n / 3);
        return `<rect class="${cls}" x="${x}" y="${y}" width="${w}" height="${h}"/>`;
    }).join('');
}

function drawBoard() {
    const board = document.getElementById('board');
    let out = '';
    areas.forEach(area => {
        out += `<g transform="translate(${area.x} ${area.y})">`;
        out += rects(area.chip, 'chip') + rects(area.pad, 'pad') + rects(area.part, 'part') + rects(area.red, 'mark');
        area.ref.split(',').forEach(item => {
            const [x, y] = item.split(' ').map(n => n / 3);
            out += `<text class="ref" x="${x}" y="${y}">U${Math.round(x * 10 + y)}</text>`;
        });
        out += '</g>';
    });
    switches.forEach(x => {
        out += `<path class="chip" d="M${x - 11} 657h22v10h-3v2h-16v-2h-3z"/><path class="pad" d="M${x - 8} 660h16v10h-16z"/><text class="ref" x="${x}" y="667">S20</text>`;
    });
    out += '<path class="red" d="M1007 654h26v10h-26z"/><path class="part" d="M1011 660l3 4 3-4zM608 490l4 2-4 3z"/>';
    // connector and processor pins
    out += '<path class="pins" d="M1161 619h82M1170 555h54M652 625h24M946 605h28M946 633h28M944 607v24M975 607v24M884 604h17M884 628h17"/>';
    out += '<text class="ref can" x="957" y="624">SH2000</text><text class="ref can" x="1119" y="618">SH4100</text>';
    board.innerHTML += out;
}

showTree();
drawBoard();
```
